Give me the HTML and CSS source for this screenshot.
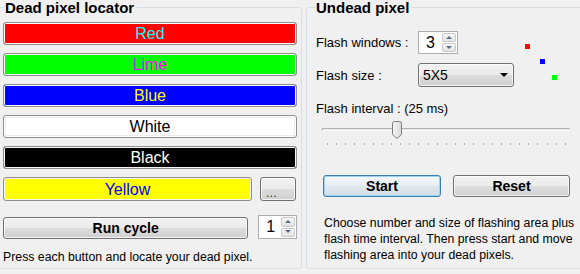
FILE: index.html
```html
<!DOCTYPE html>
<html lang="en">
<head>
  <meta charset="UTF-8" />
  <title>Dead pixel locator</title>
  <link rel="stylesheet" href="styles.css">
</head>
<body>
  <main class="window">
    <fieldset class="group locator">
      <legend>Dead pixel locator</legend>
      <div class="stack">
        <button class="swatch red" type="button">Red</button>
        <button class="swatch lime" type="button">Lime</button>
        <button class="swatch blue" type="button">Blue</button>
        <button class="swatch white" type="button">White</button>
        <button class="swatch black" type="button">Black</button>
        <div class="row">
          <button class="swatch yellow" type="button">Yellow</button>
          <button class="btn more" type="button">...</button>
        </div>
        <div class="row cycle">
          <button class="btn run" type="button">Run cycle</button>
          <div class="spin">
            <span class="spin-value">1</span>
            <span class="spin-arrows"><span class="up"></span><span class="down"></span></span>
          </div>
        </div>
        <p class="note">Press each button and locate your dead pixel.</p>
      </div>
    </fieldset>

    <fieldset class="group undead">
      <legend>Undead pixel</legend>
      <div class="stack">
        <div class="settings">
          <div class="fields">
            <div class="field">
              <span class="label">Flash windows :</span>
              <div class="spin">
                <span class="spin-value">3</span>
                <span class="spin-arrows"><span class="up"></span><span class="down"></span></span>
              </div>
            </div>
            <div class="field">
              <span class="label">Flash size :</span>
              <div class="combo">
                <span>5X5</span>
                <span class="caret"></span>
              </div>
            </div>
          </div>
          <div class="preview" aria-hidden="true">
            <span class="px px-red"></span>
            <span class="px px-blue"></span>
            <span class="px px-green"></span>
          </div>
        </div>

        <span class="label interval">Flash interval : (25 ms)</span>
        <div class="slider">
          <div class="track"></div>
          <svg class="thumb" width="11" height="19" viewBox="0 0 11 19">
            <defs>
              <linearGradient id="thumbFill" x1="0" y1="0" x2="1" y2="0">
                <stop offset="0" stop-color="#f6f6f6"/>
                <stop offset="1" stop-color="#dadada"/>
              </linearGradient>
            </defs>
            <path d="M0.5 2.5 Q0.5 0.5 2.5 0.5 H7.5 Q9.5 0.5 9.5 2.5 V13.5 L5 17.5 L0.5 13.5 Z" fill="url(#thumbFill)" stroke="#7a7a7a"/>
          </svg>
          <div class="ticks"></div>
        </div>

        <div class="actions">
          <button class="btn default" type="button">Start</button>
          <button class="btn" type="button">Reset</button>
        </div>

        <p class="note help">Choose number and size of flashing area plus flash time interval. Then press start and move flashing area into your dead pixels.</p>
      </div>
    </fieldset>
  </main>
</body>
</html>
```

FILE: styles.css
```css
* { box-sizing: border-box; }
html, body { height: 100%; }
body{
  margin:0; background:#f0f0f0; color:#000;
  font-family: "Liberation Sans", Arial, sans-serif; font-size:13px;
  overflow:hidden;
}

.window{ display:flex; gap:4px; margin-left:-3px; }

/* Group boxes */
.group{
  flex:none; margin:0; min-width:0; height:269px;
  border:1px solid #d5dfe5; border-radius:3px;
}
.group legend{
  font-weight:700; font-size:15px; line-height:15px;
  padding:0 3px 0 0;
}
.locator{ width:305px; padding:0 4px 0 5px; }
.locator legend{ margin-left:2px; }
.undead{ width:278px; padding:0 6px 0 9px; }

.stack{ display:flex; flex-direction:column; }
.locator .stack{ padding-top:7px; gap:8px; }
.undead .stack{ padding-top:16px; }

/* Buttons */
button{ font-family:inherit; cursor:pointer; }
.swatch{
  height:23px; width:100%; padding:0;
  border:1px solid #8e8f8f; border-radius:3px;
  box-shadow: inset 0 0 0 1px #f7f7f7;
  font-size:16px; line-height:21px;
}
.red{ background:#ff0000; color:#00ffff; }
.lime{ background:#00ff00; color:#ff00ff; }
.blue{ background:#0000ff; color:#ffff00; }
.white{ background:#fff; color:#000; box-shadow: inset 0 0 0 1px #fff, inset 0 0 0 2px #ececec; }
.black{ background:#000; color:#fff; }
.yellow{ background:#ffff00; color:#0000ff; height:24px; }

.btn{
  height:22px; padding:0;
  border:1px solid #707070; border-radius:3px;
  background: linear-gradient(180deg, #f2f2f2 0%, #ebebeb 48%, #dddddd 52%, #cfcfcf 100%);
  box-shadow: inset 0 0 0 1px rgba(255,255,255,.75);
  font-weight:700; font-size:14px; color:#000;
}
.btn.default{
  border-color:#3c7fb1;
  background: linear-gradient(180deg, #f3f7fa 0%, #e8eef3 48%, #dfe6ec 52%, #d3dde6 100%);
  box-shadow: inset 0 0 0 1px #9fd3f5;
}

.row{ display:flex; gap:8px; align-items:flex-start; }
.row .yellow{ width:249px; flex:none; }
.more{
  width:36px; height:24px; font-weight:400; font-size:13px; color:#333;
  text-align:left; padding:6px 0 0 5px;
}
.cycle{ margin-top:6px; align-items:center; }
.run{ width:247px; margin-top:1px; }
.cycle .spin{ margin-left:2px; width:39px; height:24px; }

/* Numeric up/down */
.spin{
  display:flex; align-items:stretch; width:40px; height:23px;
  border:1px solid #abadb3; background:#fff;
}
.spin-value{ flex:1; padding-left:7px; font-size:16px; line-height:21px; }
.spin-arrows{ display:flex; flex-direction:column; gap:1px; width:15px; padding:1px 1px 1px 0; }
.spin-arrows span{
  flex:1; position:relative; border:1px solid #c9c9c9; border-radius:2px;
  background: linear-gradient(180deg, #f7f7f7, #e2e2e2);
}
.spin-arrows span::after{
  content:""; position:absolute; left:50%; top:50%; margin:-2px 0 0 -3px;
  border-left:3px solid transparent; border-right:3px solid transparent;
}
.spin-arrows .up::after{ border-bottom:3px solid #5d6b8a; }
.spin-arrows .down::after{ border-top:3px solid #5d6b8a; }

.note{ margin:2px 0 0; font-size:12.3px; line-height:16px; }

/* Undead pixel */
.settings{ display:flex; }
.fields{ display:flex; flex-direction:column; gap:9px; }
.field{ display:flex; align-items:center; }
.label{ width:102px; font-size:13px; }
.combo{
  display:flex; align-items:center; justify-content:space-between;
  width:96px; height:24px; padding:0 5px 0 4px;
  border:1px solid #707070; border-radius:3px;
  background: linear-gradient(180deg, #f2f2f2 0%, #ebebeb 48%, #dddddd 52%, #cfcfcf 100%);
  box-shadow: inset 0 0 0 1px rgba(255,255,255,.75);
  font-size:14px;
}
.caret{ border-left:4px solid transparent; border-right:4px solid transparent; border-top:4px solid #000; }

/* free canvas showing the flashing windows */
.preview{ position:relative; flex:1; }
.px{ position:absolute; width:5px; height:5px; }
.px-red{ background:#ff0000; left:11px; top:13px; }
.px-blue{ background:#0000ff; left:26px; top:28px; }
.px-green{ background:#00ff00; left:38px; top:44px; }

.interval{ width:auto; margin-top:14px; }
.slider{ position:relative; height:40px; margin:5px 0 0 6px; width:248px; }
.track{
  margin-top:7px; height:3px; width:248px;
  border:1px solid #b0b0b0; border-bottom-color:#fff; border-right-color:#e5e5e5;
  background:#e7eaea;
}
.thumb{ position:absolute; left:70px; top:0; }
.ticks{
  margin:12px 0 0 5px; width:240px; height:2px;
  background: repeating-linear-gradient(to right, #a8a8a8 0 1px, transparent 1px 9.15px);
}

.actions{ display:flex; gap:12px; margin:14px 0 0 7px; }
.actions .btn{ width:117px; }
.actions .default{ width:118px; }

.help{ margin:18px 0 0 8px; }
```
